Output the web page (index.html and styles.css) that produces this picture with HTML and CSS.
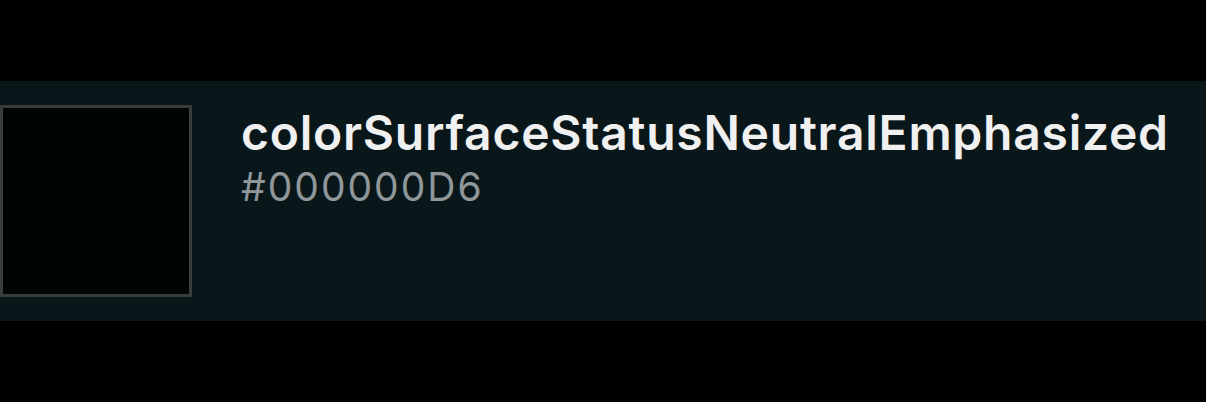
FILE: index.html
```html
<!DOCTYPE html>
<html>
<head>
<meta charset="utf-8">
<link rel="stylesheet" href="styles.css">
</head>
<body>
<div class="row">
  <div class="swatch"></div>
  <div class="info">
    <div class="name">colorSurfaceStatusNeutralEmphasized</div>
    <div class="hex">#000000D6</div>
  </div>
</div>
</body>
</html>
```
FILE: styles.css
```css
html, body {
  margin: 0;
  padding: 0;
  background: #000;
}
body {
  padding-top: 81px;
  font-family: Inter, "Noto Sans", sans-serif;
}
.row {
  display: flex;
  align-items: flex-start;
  height: 240px;
  box-sizing: border-box;
  padding-top: 24px;
  background: #09171b;
  gap: 49px;
}
.swatch {
  width: 192px;
  height: 192px;
  box-sizing: border-box;
  border: 3px solid #3a3b3b;
  background: #010405;
  flex: none;
}
.info {
  display: flex;
  flex-direction: column;
}
.name {
  font-size: 48px;
  font-weight: 600;
  color: #f0f0f0;
  line-height: 56px;
  letter-spacing: 0.75px;
  white-space: nowrap;
}
.hex {
  font-size: 39px;
  font-weight: 400;
  color: #8f979a;
  line-height: 52px;
  letter-spacing: 2px;
}
```
